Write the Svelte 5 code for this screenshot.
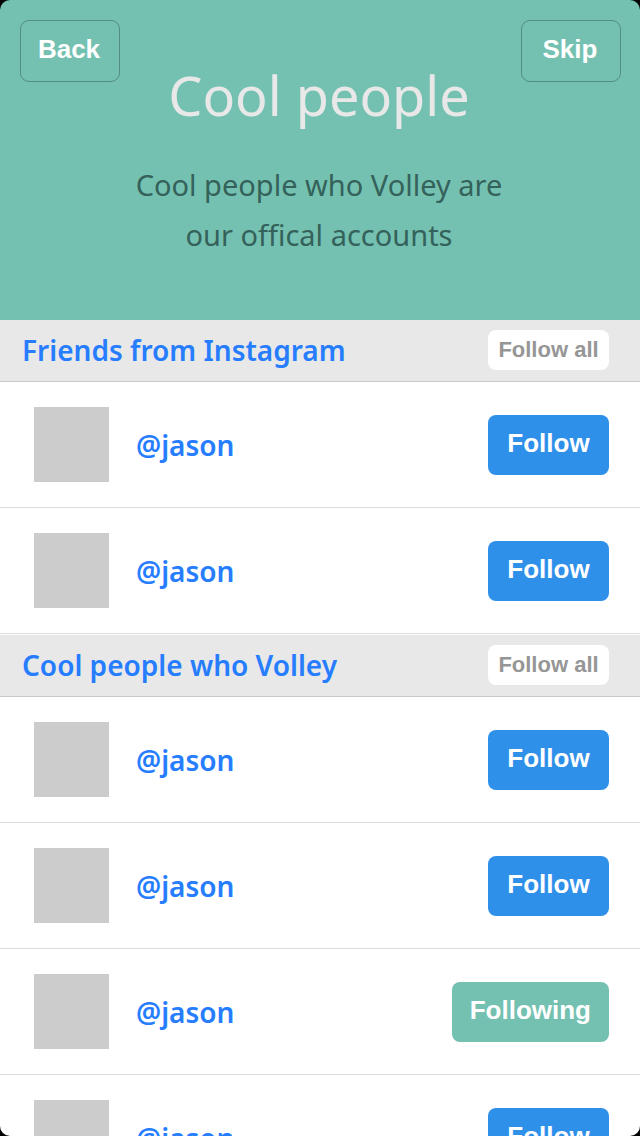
<script>
  let groups = $state([
    {
      title: 'Friends from Instagram',
      people: [
        { name: '@jason', following: false },
        { name: '@jason', following: false }
      ]
    },
    {
      title: 'Cool people who Volley',
      people: [
        { name: '@jason', following: false },
        { name: '@jason', following: false },
        { name: '@jason', following: true },
        { name: '@jason', following: false }
      ]
    }
  ]);

  function followAll(group) {
    for (const person of group.people) person.following = true;
  }
</script>

<div class="screen">
  <header>
    <button class="nav" type="button">Back</button>
    <div class="intro">
      <h1>Cool people</h1>
      <p>Cool people who Volley are<br />our offical accounts</p>
    </div>
    <button class="nav" type="button">Skip</button>
  </header>
  <main>
    {#each groups as group}
      <section>
        <div class="bar">
          <h2>{group.title}</h2>
          <button class="all" type="button" onclick={() => followAll(group)}>Follow all</button>
        </div>
        <ul>
          {#each group.people as person}
            <li>
              <span class="avatar"></span>
              <a href="#profile">{person.name}</a>
              <button
                class="follow"
                class:following={person.following}
                type="button"
                onclick={() => (person.following = !person.following)}
              >{person.following ? 'Following' : 'Follow'}</button>
            </li>
          {/each}
        </ul>
      </section>
    {/each}
  </main>
</div>

<style>
  :global(body) {
    margin: 0;
    background: #000;
  }
  .screen {
    height: 100vh;
    overflow-y: auto;
    scrollbar-width: none;
    border-radius: 10px;
    background: #fff;
    font-family: "Noto Sans", sans-serif;
  }
  header {
    display: grid;
    grid-template-columns: 100px 1fr 100px;
    box-sizing: border-box;
    min-height: 320px;
    padding: 20px 19px 0 20px;
    background: #74c1b1;
    align-items: start;
  }
  button {
    margin: 0;
    font-family: "Liberation Sans", Arial, sans-serif;
    font-weight: 700;
    cursor: pointer;
  }
  .nav {
    height: 62px;
    padding: 0 2px 3px 0;
    border: 1px solid #558d82;
    border-radius: 9px;
    background: transparent;
    color: #fff;
    font-size: 26px;
  }
  .intro {
    padding-right: 3px;
    text-align: center;
    white-space: nowrap;
  }
  h1 {
    margin: 39px 0 0;
    color: #e8e8e8;
    font-size: 54px;
    line-height: 72px;
    font-weight: 400;
  }
  p {
    margin: 29px 0 0;
    color: #34625a;
    font-size: 29px;
    line-height: 50px;
  }
  .bar {
    display: flex;
    align-items: center;
    justify-content: space-between;
    box-sizing: border-box;
    height: 62px;
    padding: 0 31px 1px 22px;
    border-bottom: 1px solid #c8c8c8;
    background: #e8e8e8;
  }
  h2 {
    margin: 0;
    color: #267dff;
    font-size: 28px;
    line-height: 40px;
    font-weight: 600;
  }
  .all {
    min-width: 121px;
    height: 40px;
    padding: 0 10px;
    border: 0;
    border-radius: 8px;
    background: #fff;
    color: #969696;
    font-size: 22px;
  }
  ul {
    margin: 0;
    padding: 0;
    list-style: none;
  }
  li {
    display: flex;
    align-items: center;
    box-sizing: border-box;
    height: 126px;
    padding: 0 31px 0 34px;
    border-bottom: 1px solid #dcdcdc;
  }
  section + section {
    border-top: 1px solid #fff;
  }
  .avatar {
    width: 75px;
    height: 75px;
    background: #ccc;
  }
  a {
    margin: 0 auto 0 27px;
    color: #267dff;
    font-size: 28px;
    font-weight: 600;
    text-decoration: none;
  }
  .follow {
    min-width: 121px;
    height: 60px;
    padding: 0 18px 2px;
    border: 0;
    border-radius: 8px;
    background: #2f90ea;
    color: #fff;
    font-size: 26px;
  }
  .following {
    background: #74c1b1;
  }
</style>
